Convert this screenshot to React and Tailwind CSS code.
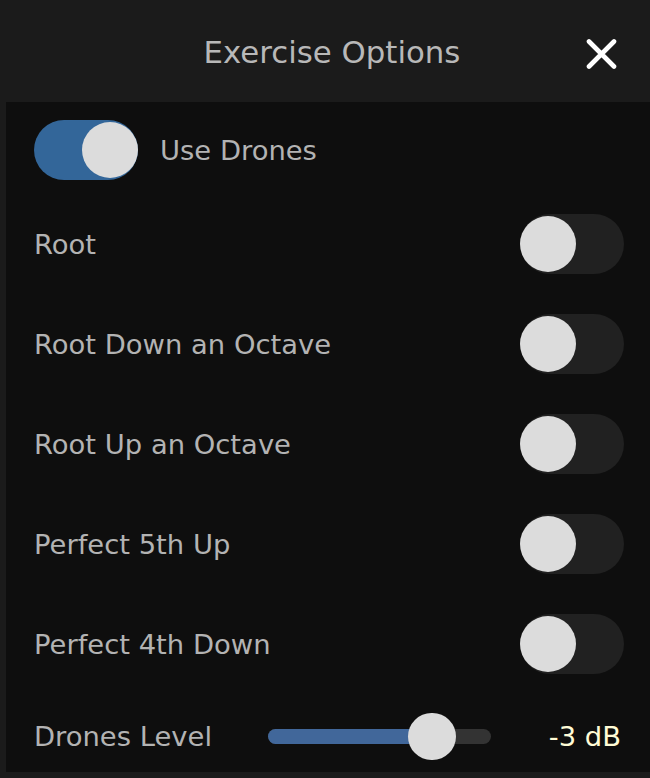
import React from "react";

function Switch({ on }) {
  return (
    <div
      className={
        "relative flex h-[60px] w-[104px] shrink-0 items-center rounded-full " +
        (on ? "justify-end bg-[#336699]" : "justify-start bg-[#212121]")
      }
    >
      <div className="h-[56px] w-[56px] rounded-full bg-[#dcdcdc]" />
    </div>
  );
}

const rows = [
  "Root",
  "Root Down an Octave",
  "Root Up an Octave",
  "Perfect 5th Up",
  "Perfect 4th Down",
];

export default function App() {
  return (
    <div
      className="flex h-[778px] w-[650px] flex-col bg-[#1b1b1b] text-[#b3b3b3]"
      style={{ fontFamily: '"DejaVu Sans", Verdana, sans-serif' }}
    >
      <div className="relative flex h-[102px] shrink-0 items-center justify-center">
        <div className="ml-[14px] pt-[2px] text-[30.8px] text-[#b8b8b8]">Exercise Options</div>
        <svg
          className="absolute left-[586px] top-[39px]"
          width="31"
          height="30"
          viewBox="0 0 31 30"
        >
          <path
            d="M3 2.5 L28 27.5 M28 2.5 L3 27.5"
            stroke="#ffffff"
            strokeWidth="4.6"
            strokeLinecap="round"
          />
        </svg>
      </div>
      <div className="ml-[6px] flex h-[670px] flex-col bg-[#0e0e0e] text-[27.4px]">
        <div className="flex items-center gap-[22px] pl-[28px] pt-[18px]">
          <Switch on />
          <span className="pt-[2px]">Use Drones</span>
        </div>
        <div className="mt-[14px] flex flex-col">
          {rows.map((r) => (
            <div key={r} className="flex h-[100px] items-center justify-between pl-[28px] pr-[26px]">
              <span className="pt-[2px]">{r}</span>
              <Switch on={false} />
            </div>
          ))}
        </div>
        <div className="flex h-[78px] items-center pl-[28px] pr-[29px] pt-[6px]">
          <span className="w-[234px] shrink-0 pt-[2px]">Drones Level</span>
          <div className="relative flex h-[15px] w-[223px] shrink-0 items-center rounded-full bg-[#333333]">
            <div className="h-[15px] w-[164px] rounded-full bg-[#41679a]" />
            <div className="absolute left-[140px] top-[-16px] h-[47px] w-[48px] rounded-full bg-[#dcdcdc]" />
          </div>
          <span className="flex-1 pt-[2px] text-right text-[#fffbd6]">-3 dB</span>
        </div>
      </div>
    </div>
  );
}
